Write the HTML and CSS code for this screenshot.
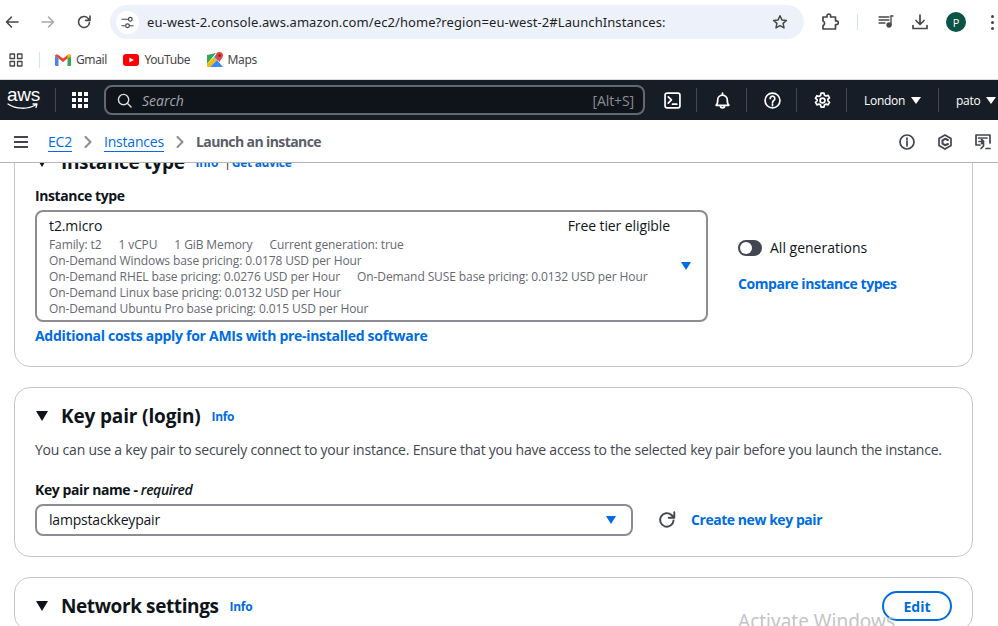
FILE: index.html
```html
<!DOCTYPE html>
<html lang="en">
<head>
  <meta charset="UTF-8">
  <title>Launch an instance | EC2</title>
  <link rel="stylesheet" href="styles.css">
</head>
<body>
  <!-- Browser toolbar -->
  <div class="toolbar">
    <svg class="tb-icon" viewBox="0 0 16 16"><path d="M14 8H3M7.5 3 2.5 8l5 5"/></svg>
    <svg class="tb-icon faded" viewBox="0 0 16 16"><path d="M2 8h11M8.5 3l5 5-5 5"/></svg>
    <svg class="tb-icon" viewBox="0 0 16 16"><path d="M13.500 8.500A5.500 5.500 0 1 1 12 4.200L14 6.200M14 2v4.400H9.600"/></svg>
    <div class="omnibox">
      <span class="site-chip">
        <svg viewBox="0 0 14 14"><path d="M1 3.500h6M1 10.500h3"/><circle cx="10" cy="3.500" r="2"/><circle cx="7" cy="10.500" r="2"/><path d="M9.500 10.500H13"/></svg>
      </span>
      <span class="url">eu-west-2.console.aws.amazon.com/ec2/home?region=eu-west-2#LaunchInstances:</span>
      <svg class="star" viewBox="0 0 16 16"><path d="m8 1.800 1.900 4.100 4.500.5-3.300 3 .9 4.500L8 11.600l-4 2.300.9-4.500-3.300-3 4.500-.5z"/></svg>
    </div>
    <svg class="ext" viewBox="0 0 18 18"><path d="M2 4h4V2.800a1.800 1.800 0 0 1 3.600 0V4h4.900v3.800h1a1.900 1.900 0 0 1 0 3.800h-1V16H2v-3.500a2.400 2.400 0 0 0 0-4.500z"/></svg>
    <span class="tb-divider"></span>
    <svg class="media" viewBox="0 0 16 16"><path d="M1 3h10M1 6h10M1 9h6"/><path d="M13 2v9"/><circle cx="11" cy="11" r="2" class="solid"/><path d="M13 2h2"/></svg>
    <svg class="download" viewBox="0 0 16 16"><path d="M8 1v9M4 6.500 8 10.500l4-4M1 11.500v3h14v-3"/></svg>
    <span class="avatar">P</span>
    <span class="dots"><i></i><i></i><i></i></span>
  </div>

  <!-- Bookmarks -->
  <div class="bookmarks">
    <svg class="apps" viewBox="0 0 14 14"><path d="M1 1h4.500v4.500H1zM8.500 1H13v4.500H8.500zM1 8.500h4.500V13H1zM8.500 8.500H13V13H8.500z"/></svg>
    <span class="bm-divider"></span>
    <div class="bm">
      <svg viewBox="0 0 16 12"><path fill="#4285f4" d="M0 2v9a1 1 0 0 0 1 1h2.500V4.500z"/><path fill="#34a853" d="M16 2v9a1 1 0 0 1-1 1h-2.500V4.500z"/><path fill="#ea4335" d="M0 2C0 .3 2 0 3 .8L8 4.500 13 .8c1-.8 3-.5 3 1.200L12.500 4.500 8 8 3.500 4.500z"/><path fill="#fbbc04" d="M12.500 4.500 16 2c0-1-.8-1.800-1.500-1.800-.5 0-1 .2-2 1z"/></svg>
      <span>Gmail</span>
    </div>
    <div class="bm">
      <svg viewBox="0 0 16 12"><rect width="16" height="12" rx="3" fill="#f00"/><path fill="#fff" d="m6.400 3.400 4.400 2.600-4.400 2.600z"/></svg>
      <span>YouTube</span>
    </div>
    <div class="bm">
      <svg class="maps" viewBox="0 0 16 16"><path fill="#34a853" d="M0 3 9 1 0 12z"/><path fill="#fbbc04" d="M0 12 7 5l3 3-7 7H1a1 1 0 0 1-1-1z"/><path fill="#4285f4" d="M3 15 10 8l6 7z"/><path fill="#4285f4" d="M7 5 10 1.500 12 9l-2-1z"/><path fill="#ea4335" d="M12.500 0a3.500 3.500 0 0 1 3.500 3.500C16 6 13.500 7.500 12.500 10c-1-2.500-3.500-4-3.500-6.500A3.500 3.500 0 0 1 12.500 0z"/><circle cx="12.500" cy="3.500" r="1.200" fill="#8a1a12"/></svg>
      <span>Maps</span>
    </div>
  </div>

  <!-- AWS top navigation -->
  <nav class="aws-nav">
    <div class="aws-logo">
      <span>aws</span>
      <svg viewBox="0 0 32 7"><path d="M1 1c8 5.500 20 5.500 28 .8M26 1h4l-1 3.600"/></svg>
    </div>
    <span class="nav-sep"></span>
    <svg class="services" viewBox="0 0 16 16"><path d="M0 0h4v4H0zM6 0h4v4H6zM12 0h4v4h-4zM0 6h4v4H0zM6 6h4v4H6zM12 6h4v4h-4zM0 12h4v4H0zM6 12h4v4H6zM12 12h4v4h-4z"/></svg>
    <div class="search">
      <svg viewBox="0 0 16 16"><circle cx="7" cy="7" r="5.500"/><path d="m11 11 4 4"/></svg>
      <span class="search-text">Search</span>
      <span class="shortcut">[Alt+S]</span>
    </div>
    <div class="nav-icons">
      <div class="nav-item"><svg viewBox="0 0 16 16"><rect x="1" y="1" width="14" height="14" rx="2"/><path d="m4 4.500 3 3-3 3M8 11.500h4"/></svg></div>
      <div class="nav-item"><svg viewBox="0 0 16 16"><path d="M2 12.500c1.500-1 1.500-2.500 1.500-5a4.500 4.500 0 0 1 9 0c0 2.500 0 4 1.500 5zM6 13c0 2.500 4 2.500 4 0M8 1v2"/></svg></div>
      <div class="nav-item"><svg viewBox="0 0 16 16"><circle cx="8" cy="8" r="7"/><path d="M5.800 6.200a2.200 2.200 0 1 1 3.400 1.800C8.400 8.500 8 9 8 10"/><path d="M8 11.400v1.200"/></svg></div>
      <div class="nav-item"><svg viewBox="0 0 16 16"><circle cx="8" cy="8" r="2.300"/><path d="M6.600 1h2.800l.4 2 1.500.8 1.900-.7 1.400 2.400-1.500 1.300v1.600l1.500 1.300-1.400 2.400-1.900-.7-1.500.8-.4 2H6.600l-.4-2-1.500-.8-1.900.7-1.400-2.400 1.500-1.300V7.200L1.400 5.900l1.400-2.400 1.900.7 1.500-.8z"/></svg></div>
      <div class="nav-menu region">London <i class="nav-caret"></i></div>
      <div class="nav-menu user">pato <i class="nav-caret"></i></div>
    </div>
  </nav>

  <!-- Breadcrumbs -->
  <div class="crumbs">
    <svg class="burger" viewBox="0 0 14 12"><path d="M0 1h14M0 6h14M0 11h14"/></svg>
    <a class="crumb-link">EC2</a>
    <svg class="chevron" viewBox="0 0 8 12"><path d="m1.500 1 5 5-5 5"/></svg>
    <a class="crumb-link">Instances</a>
    <svg class="chevron" viewBox="0 0 8 12"><path d="m1.500 1 5 5-5 5"/></svg>
    <span class="crumb-current">Launch an instance</span>
    <div class="crumb-tools">
      <svg viewBox="0 0 16 16"><circle cx="8" cy="8" r="7"/><path d="M8 7v5M8 4v1.600"/></svg>
      <svg viewBox="0 0 16 16"><path d="M8 1l6 3.500v7L8 15l-6-3.500v-7z"/><path d="M11 6 8 4.800 5.500 6.300v3.400L8 11.200l3-1.200" class="thick"/></svg>
      <svg viewBox="0 0 16 16"><path d="M5 11H1V1h14v8"/><path d="M3.500 4h1M6 4h1M8.500 4h1M11 4h1" /><path d="M4 7.500h4.500M6.500 5.500l2.200 2-2.200 2M6 14.500l2.500-2.500V9M11 14.500h4"/></svg>
    </div>
  </div>

  <!-- Scrolled content -->
  <main class="content">
    <section class="card card-instance">
      <div class="card-head">
        <i class="toggle-caret"></i>
        <h2>Instance type</h2>
        <span class="info">Info</span>
        <span class="info-sep">|</span>
        <span class="info">Get advice</span>
      </div>
      <div class="instance-row">
        <div class="instance-main">
          <label class="field-label">Instance type</label>
          <div class="select select-large">
            <div class="select-body">
              <div class="select-title"><span>t2.micro</span><span>Free tier eligible</span></div>
              <div class="select-meta">
                <span>Family: t2</span><span>1 vCPU</span><span>1 GiB Memory</span><span>Current generation: true</span>
              </div>
              <div class="select-meta">On-Demand Windows base pricing: 0.0178 USD per Hour</div>
              <div class="select-meta">
                <span>On-Demand RHEL base pricing: 0.0276 USD per Hour</span><span>On-Demand SUSE base pricing: 0.0132 USD per Hour</span>
              </div>
              <div class="select-meta">On-Demand Linux base pricing: 0.0132 USD per Hour</div>
              <div class="select-meta">On-Demand Ubuntu Pro base pricing: 0.015 USD per Hour</div>
            </div>
            <i class="select-caret"></i>
          </div>
          <a class="link costs-link">Additional costs apply for AMIs with pre-installed software</a>
        </div>
        <div class="instance-side">
          <div class="switch-row"><span class="switch"></span><span class="switch-label">All generations</span></div>
          <a class="link">Compare instance types</a>
        </div>
      </div>
    </section>

    <section class="card card-key">
      <div class="card-head">
        <i class="toggle-caret"></i>
        <h2>Key pair (login)</h2>
        <span class="info">Info</span>
      </div>
      <p class="card-desc">You can use a key pair to securely connect to your instance. Ensure that you have access to the selected key pair before you launch the instance.</p>
      <label class="field-label">Key pair name - <em>required</em></label>
      <div class="key-row">
        <div class="select select-key">
          <span class="key-value">lampstackkeypair</span>
          <i class="select-caret"></i>
        </div>
        <svg class="refresh" viewBox="0 0 16 16"><path d="M13.800 8.500A6 6 0 1 1 12 3.600L14 5.500M14.500 1v5H9.500"/></svg>
        <a class="link">Create new key pair</a>
      </div>
    </section>

    <section class="card card-network">
      <div class="card-head">
        <i class="toggle-caret"></i>
        <h2>Network settings</h2>
        <span class="info">Info</span>
        <button class="edit-btn">Edit</button>
      </div>
    </section>
  </main>

  <div class="watermark">Activate Windows</div>
</body>
</html>
```

FILE: styles.css
```css
* {
  box-sizing: border-box;
}

html,
body {
  margin: 0;
  padding: 0;
  height: 626px;
  overflow: hidden;
}

body {
  font-family: "Open Sans", "Noto Sans", Arial, sans-serif;
  font-size: 14px;
  color: #0f141a;
  background: #fff;
  position: relative;
}

svg {
  display: block;
  flex: none;
  fill: none;
  stroke-linecap: round;
  stroke-linejoin: round;
}

/* Browser toolbar */
.toolbar {
  height: 40px;
  padding: 5px 0 1px 4px;
  display: flex;
  align-items: center;
  background: #fff;
}

.tb-icon {
  width: 16px;
  height: 16px;
  margin-right: 20px;
  stroke: #474747;
  stroke-width: 1.600;
}

.tb-icon.faded {
  stroke: #a8a8a8;
}

.omnibox {
  width: 694px;
  height: 34px;
  margin-left: -2px;
  padding: 0 16px 0 6px;
  border-radius: 17px;
  background: #edf2fa;
  display: flex;
  align-items: center;
}

.site-chip {
  width: 23px;
  height: 23px;
  border-radius: 50%;
  background: #fff;
  display: flex;
  align-items: center;
  justify-content: center;
}

.site-chip svg {
  width: 13px;
  height: 13px;
  stroke: #474747;
  stroke-width: 1.300;
}

.url {
  margin-left: 8px;
  font-family: "Noto Sans", sans-serif;
  font-size: 13px;
  letter-spacing: 0.08px;
  color: #1f1f1f;
  white-space: nowrap;
  flex: 1;
}

.star {
  width: 16px;
  height: 16px;
  stroke: #474747;
  stroke-width: 1.500;
}

.ext {
  width: 18px;
  height: 18px;
  margin-left: 17px;
  stroke: #474747;
  stroke-width: 1.700;
}

.tb-divider {
  width: 1px;
  height: 16px;
  margin-left: 18px;
  background: #d3e3fd;
}

.media {
  width: 16px;
  height: 16px;
  margin-left: 20px;
  stroke: #474747;
  stroke-width: 1.300;
}

.media .solid {
  fill: #474747;
}

.download {
  width: 16px;
  height: 16px;
  margin-left: 18px;
  stroke: #474747;
  stroke-width: 1.700;
}

.avatar {
  width: 20px;
  height: 20px;
  margin-left: 18px;
  border-radius: 50%;
  background: #0b5345;
  color: #fff;
  font-size: 11px;
  display: flex;
  align-items: center;
  justify-content: center;
}

.dots {
  margin-left: 25px;
  display: flex;
  flex-direction: column;
  gap: 3px;
}

.dots i {
  width: 3px;
  height: 3px;
  border-radius: 50%;
  background: #474747;
}

/* Bookmarks */
.bookmarks {
  height: 40px;
  padding: 0 0 0 9px;
  display: flex;
  align-items: center;
  background: #fff;
  border-bottom: 1px solid #d9d9d9;
}

.apps {
  width: 14px;
  height: 14px;
  stroke: #474747;
  stroke-width: 1.300;
}

.bm-divider {
  width: 1px;
  height: 16px;
  margin: 0 15px 0 16px;
  background: #d3e3fd;
}

.bm {
  display: flex;
  align-items: center;
  gap: 5px;
  margin-right: 16.500px;
  font-family: "Noto Sans", sans-serif;
  font-size: 12px;
  letter-spacing: -0.4px;
  color: #474747;
}

.bm svg {
  width: 16px;
  height: 12px;
}

.bm .maps {
  width: 16px;
  height: 16px;
}

/* AWS nav */
.aws-nav {
  height: 40px;
  display: flex;
  align-items: center;
  background: #161d26;
  color: #fff;
}

.aws-logo {
  width: 55px;
  padding-left: 7px;
  height: 30px;
  position: relative;
  font-family: "Liberation Sans", sans-serif;
  font-size: 19px;
  line-height: 20px;
  letter-spacing: -0.3px;
}

.aws-logo svg {
  width: 32px;
  height: 7px;
  margin-top: -2px;
  stroke: #fff;
  stroke-width: 1.300;
}

.nav-sep {
  width: 1px;
  height: 24px;
  background: #424650;
}

.services {
  width: 16px;
  height: 16px;
  margin-left: 16px;
  fill: #fff;
}

.search {
  width: 541px;
  height: 30px;
  margin-left: 16px;
  padding: 0 9px 0 11px;
  display: flex;
  align-items: center;
  background: #0f141a;
  border: 2px solid #656871;
  border-radius: 8px;
}

.search svg {
  width: 15px;
  height: 15px;
  stroke: #dedee3;
  stroke-width: 1.500;
}

.search-text {
  margin-left: 10px;
  flex: 1;
  font-style: italic;
  color: #a4a4ad;
}

.shortcut {
  font-size: 14px;
  letter-spacing: -0.1px;
  color: #8c8c94;
}

.nav-icons {
  flex: 1;
  display: flex;
  align-items: center;
  height: 100%;
}

.nav-item {
  width: 50px;
  height: 24px;
  padding-left: 2px;
  border-right: 1px solid #424650;
  display: flex;
  align-items: center;
  justify-content: center;
}

.nav-item:first-child {
  margin-left: 2px;
}

.nav-item svg {
  width: 17px;
  height: 17px;
  stroke: #fff;
  stroke-width: 1.600;
}

.nav-menu {
  height: 24px;
  display: flex;
  align-items: center;
  gap: 6px;
  font-size: 12px;
  letter-spacing: -0.3px;
  white-space: nowrap;
}

.nav-menu.region {
  width: 92px;
  padding-left: 17px;
  border-right: 1px solid #424650;
}

.nav-menu.user {
  padding-left: 17px;
}

.nav-caret {
  width: 0;
  height: 0;
  border-left: 5px solid transparent;
  border-right: 5px solid transparent;
  border-top: 7px solid #fff;
}

/* Breadcrumbs */
.crumbs {
  height: 43px;
  padding: 1px 0 0 14px;
  display: flex;
  align-items: center;
  background: #fff;
  border-bottom: 1px solid #b4b4bb;
  position: relative;
  z-index: 2;
}

.burger {
  width: 14px;
  height: 12px;
  margin-right: 20px;
  stroke: #424650;
  stroke-width: 2;
}

.crumb-link {
  color: #006ce0;
  border-bottom: 1px solid #006ce0;
  line-height: 19px;
  letter-spacing: -0.2px;
}

.chevron {
  width: 8px;
  height: 12px;
  margin: 0 12px;
  stroke: #8c8c94;
  stroke-width: 2;
}

.crumb-current {
  color: #5a5e68;
  font-weight: 700;
  letter-spacing: -0.6px;
}

.crumb-tools {
  margin-left: auto;
  padding-right: 7px;
  display: flex;
  gap: 22px;
}

.crumb-tools svg {
  width: 16px;
  height: 16px;
  stroke: #424650;
  stroke-width: 1.700;
}

.crumb-tools .thick {
  stroke-width: 2;
}

/* Content, scrolled so the first card sits under the breadcrumbs */
.content {
  padding: 0 25px 0 14px;
  background: #fff;
}

.card {
  width: 959px;
  margin-bottom: 20px;
  padding: 0 20px;
  border: 1px solid #c6c6cd;
  border-radius: 16px;
  background: #fff;
}

.card-instance {
  height: 234px;
  margin-top: -30px;
}

.card-key {
  height: 170px;
}

.card-head {
  height: 52px;
  padding-top: 4px;
  display: flex;
  align-items: center;
}

.toggle-caret {
  width: 0;
  height: 0;
  margin: 0 13px 0 1px;
  border-left: 6px solid transparent;
  border-right: 6px solid transparent;
  border-top: 10px solid #0f141a;
}

h2 {
  margin: 0;
  font-size: 19px;
  font-weight: 700;
  letter-spacing: -0.4px;
}

.card-key h2 {
  letter-spacing: -0.15px;
}

.info {
  margin-left: 11px;
  font-size: 12px;
  font-weight: 700;
  letter-spacing: -0.3px;
  color: #006ce0;
}

.info-sep {
  margin-left: 6px;
  font-size: 12px;
  color: #0f141a;
}

.info-sep + .info {
  margin-left: 1px;
}

.field-label {
  display: block;
  font-weight: 700;
  line-height: 20px;
  letter-spacing: -0.4px;
}

.field-label em {
  font-weight: 600;
}

.instance-row {
  display: flex;
}

.instance-main {
  width: 673px;
}

.select {
  border: 2px solid #8c8c94;
  border-radius: 8px;
  position: relative;
}

.select-large {
  height: 112px;
  margin-top: 4px;
  padding: 5px 12px;
}

.select-body {
  width: 621px;
}

.select-title {
  display: flex;
  justify-content: space-between;
  line-height: 18px;
  margin-bottom: 2px;
  letter-spacing: -0.1px;
}

.select-meta {
  display: flex;
  gap: 17px;
  font-size: 12px;
  line-height: 16px;
  letter-spacing: -0.1px;
  color: #656871;
}

.select-caret {
  width: 0;
  height: 0;
  position: absolute;
  right: 15px;
  top: 50%;
  margin-top: -4px;
  border-left: 5.500px solid transparent;
  border-right: 5.500px solid transparent;
  border-top: 8px solid #006ce0;
}

.link {
  color: #006ce0;
  font-weight: 700;
  line-height: 20px;
  letter-spacing: -0.45px;
}

.costs-link {
  display: block;
  margin-top: 4px;
  letter-spacing: -0.29px;
}

.instance-side {
  margin-left: 30px;
  padding-top: 52px;
  display: flex;
  flex-direction: column;
  gap: 16px;
}

.switch-row {
  height: 20px;
  display: flex;
  align-items: center;
  gap: 8px;
}

.switch-label {
  padding-bottom: 2px;
}

.switch {
  width: 24px;
  height: 16px;
  border-radius: 8px;
  background: #424650;
  position: relative;
}

.switch::after {
  content: "";
  position: absolute;
  left: 2px;
  top: 2px;
  width: 12px;
  height: 12px;
  border-radius: 50%;
  background: #fff;
}

.card-desc {
  margin: 0 0 20px;
  color: #424650;
  line-height: 20px;
  letter-spacing: -0.22px;
  white-space: nowrap;
}

.key-row {
  margin-top: 4px;
  display: flex;
  align-items: center;
}

.select-key {
  width: 598px;
  height: 32px;
  padding: 0 12px;
  display: flex;
  align-items: center;
  letter-spacing: -0.2px;
}

.key-value {
  padding-bottom: 2px;
}

.refresh {
  width: 18px;
  height: 18px;
  margin: 0 15px 0 25px;
  stroke: #424650;
  stroke-width: 1.700;
}

.edit-btn {
  width: 70px;
  height: 30px;
  margin-left: auto;
  padding: 0;
  border: 2px solid #006ce0;
  border-radius: 15px;
  background: #fff;
  color: #006ce0;
  font: 700 14px "Open Sans", sans-serif;
}

.watermark {
  position: absolute;
  left: 738px;
  top: 608px;
  font-family: "Noto Sans", sans-serif;
  font-size: 19px;
  color: #c4c4c4;
  white-space: nowrap;
}
```
